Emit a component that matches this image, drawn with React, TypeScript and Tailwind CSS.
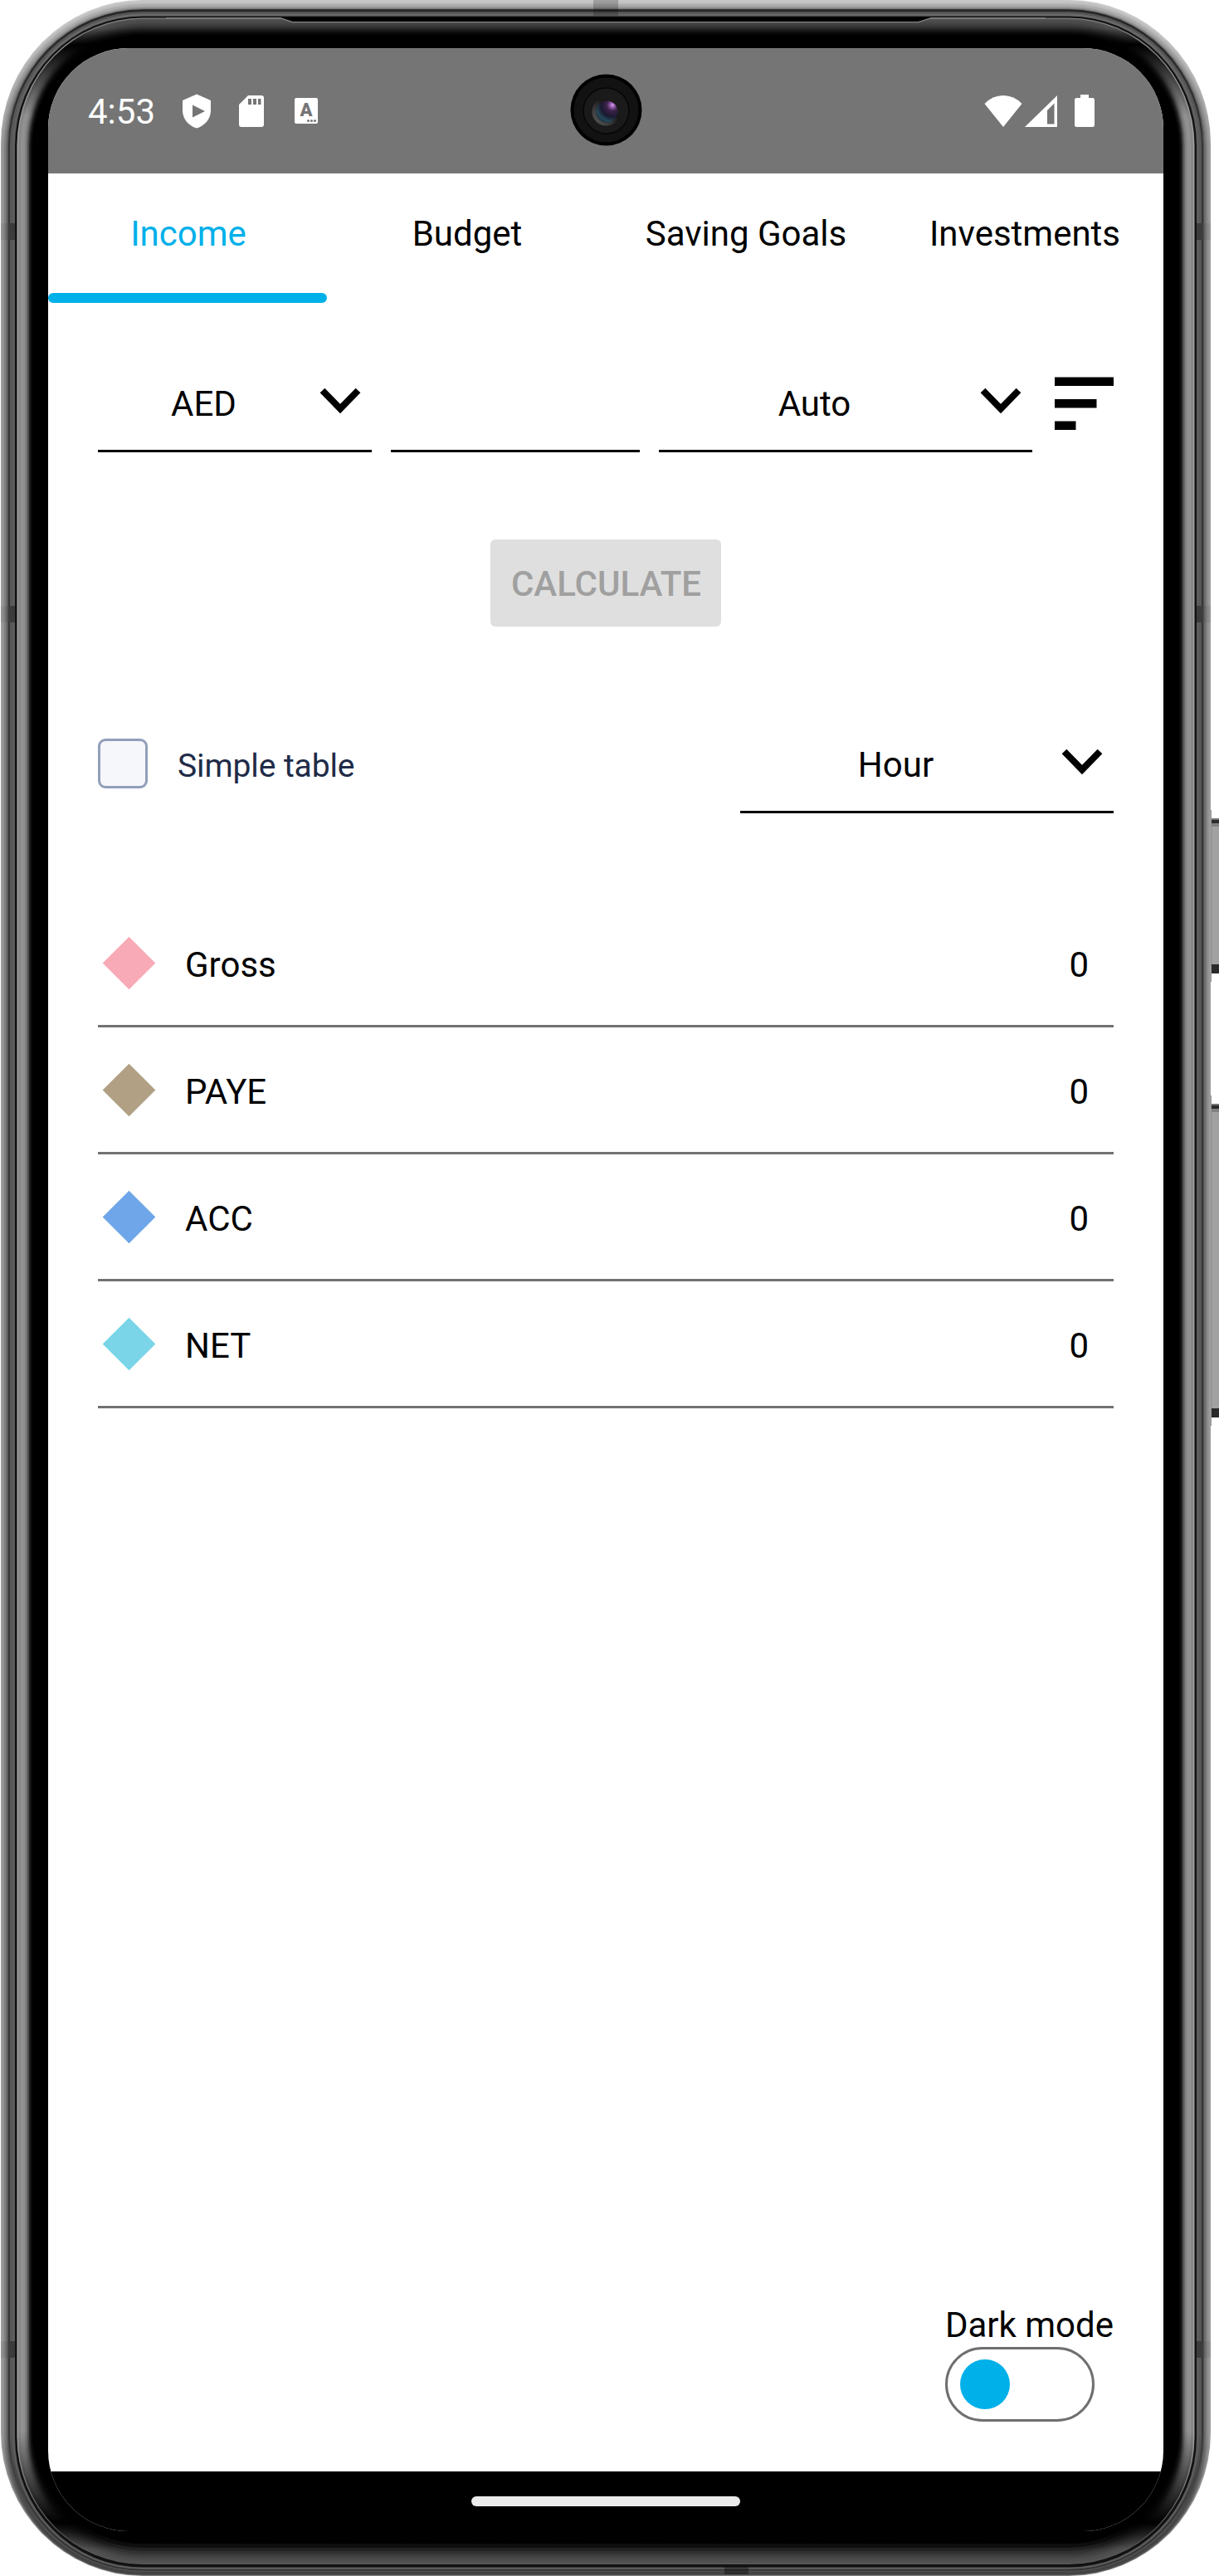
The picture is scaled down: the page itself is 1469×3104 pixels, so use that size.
import React from "react";

/* Shell layers from the outside in: insets [side, top, bottom] and grey levels [side, top, bottom]. */
const layers: { inset: [number, number, number]; tone: [number, number, number] }[] = [
  { inset: [1, 0, 0], tone: [156, 200, 138] },
  { inset: [3, 2.5, 0.7], tone: [146, 190, 90] },
  { inset: [5, 5, 1.5], tone: [128, 172, 72] },
  { inset: [7, 8, 2.5], tone: [110, 150, 64] },
  { inset: [8.7, 10, 3.5], tone: [86, 118, 69] },
  { inset: [10, 11.3, 5], tone: [54, 38, 80] },
  { inset: [12, 14, 6.5], tone: [88, 84, 48] },
  { inset: [15, 16.5, 8], tone: [92, 104, 90] },
  { inset: [18, 19.5, 10.5], tone: [18, 16, 18] },
  { inset: [20.5, 21.5, 14], tone: [160, 128, 88] },
  { inset: [22, 22.8, 15], tone: [136, 80, 82] },
  { inset: [25, 25, 17], tone: [146, 74, 78] },
  { inset: [28, 28, 20], tone: [142, 66, 73] },
  { inset: [30, 30, 22], tone: [128, 58, 66] },
  { inset: [32, 32, 24.5], tone: [106, 48, 58] },
  { inset: [33.5, 34, 27], tone: [74, 38, 48] },
  { inset: [35, 36, 30], tone: [40, 27, 34] },
  { inset: [36.5, 38.5, 34], tone: [14, 13, 16] },
  { inset: [38.5, 41.5, 39], tone: [0, 0, 0] },
];

const grey = (n: number) => `rgb(${n},${n},${n})`;

function PhoneShell() {
  return (
    <svg className="pointer-events-none absolute inset-0" width="1469" height="3104" viewBox="0 0 1469 3104">
      <defs>
        {layers.map((l, i) => {
          const sheen = i > 9;
          return (
            <linearGradient key={i} id={`shell${i}`} gradientUnits="userSpaceOnUse" x1="0" y1="0" x2="0" y2="3104">
              <stop offset={(sheen ? 34 : 25) / 3104} stopColor={grey(l.tone[1])} />
              {sheen && <stop offset={54 / 3104} stopColor={grey(0)} />}
              <stop offset={(sheen ? 140 : 180) / 3104} stopColor={grey(l.tone[0])} />
              <stop offset={2930 / 3104} stopColor={grey(l.tone[0])} />
              {sheen && <stop offset={3040 / 3104} stopColor={grey(0)} />}
              <stop offset={(sheen ? 3072 : 3050) / 3104} stopColor={grey(l.tone[2])} />
            </linearGradient>
          );
        })}
        <linearGradient id="side" x1="0" x2="1" y1="0" y2="0">
          <stop offset="0" stopColor="#686868" />
          <stop offset="0.3" stopColor="#a2a2a2" />
          <stop offset="1" stopColor="#a0a0a0" />
        </linearGradient>
        <radialGradient id="lens" cx="0.75" cy="0.2" r="0.9">
          <stop offset="0" stopColor="#dca0f0" />
          <stop offset="0.13" stopColor="#8d57a4" />
          <stop offset="0.3" stopColor="#3b2148" />
          <stop offset="0.6" stopColor="#1a1a30" />
          <stop offset="0.85" stopColor="#25485a" />
          <stop offset="1" stopColor="#16303c" />
        </radialGradient>
        <linearGradient id="rim" x1="0" x2="1" y1="1" y2="0">
          <stop offset="0.1" stopColor="#555" />
          <stop offset="0.6" stopColor="#1a1a1a" />
        </linearGradient>
      </defs>

      {[
        [986, 187],
        [1330, 378],
      ].map(([y, h]) => (
        <g key={y}>
          <rect x="1458" y={y} width="11" height={h} fill="url(#side)" />
          <rect x="1460" y={y} width="9" height="3" fill="#777" />
          <rect x="1460" y={y + 2} width="9" height="4" fill="#2c2c2c" />
          <rect x="1460" y={y + 6} width="9" height="4" fill="#808080" />
          <rect x="1460" y={y + h - 11} width="9" height="11" fill="#2a2a2a" />
          <rect x="1457" y={y - 10} width="3" height={h + 20} fill="#999" />
        </g>
      ))}

      {layers.map(({ inset: [s, t, b] }, i) => (
        <rect key={i} x={s} y={t} width={1460 - 2 * s} height={3104 - t - b} rx={172 - s} ry={174 - s} fill={`url(#shell${i})`} />
      ))}

      <path d="M337 21H1123L1107 26H353Z" fill="#000" />
      <path d="M200 21.6H338L352 26.6H1107L1122 21.6H1260" fill="none" stroke="#808080" strokeWidth="1.3" />
      <rect x="715" y="0" width="30" height="19" fill="#000" fillOpacity="0.2" />
      <rect x="873" y="3093" width="29" height="9" fill="#000" fillOpacity="0.35" />
      {[269, 730, 2821].map((y) => (
        <g key={y}>
          <rect x="10" y={y} width="8" height="20" fill="#3c3c3c" />
          <rect x="1" y={y} width="9" height="20" fill="#000" fillOpacity="0.06" />
          <rect x="1442" y={y} width="8" height="20" fill="#3c3c3c" />
          <rect x="1450" y={y} width="9" height="20" fill="#000" fillOpacity="0.06" />
        </g>
      ))}
    </svg>
  );
}

function Camera() {
  return (
    <svg className="absolute left-[629px] top-[31px]" width="87" height="87" viewBox="-43.5 -43.5 87 87">
      <circle r="43" fill="#000" />
      <circle r="39" fill="#121212" />
      <circle r="27.5" cy="1" fill="#1a1a1a" stroke="#060606" strokeWidth="1.5" />
      <circle r="17" cy="2" fill="url(#rim)" />
      <circle r="13" cy="2" cx="1" fill="url(#lens)" />
    </svg>
  );
}

function StatusBar() {
  return (
    <div className="relative flex h-[151px] items-start justify-between bg-[#757575] pl-12 pr-[83px] text-white">
      <div className="flex h-[151px] items-center">
        <span className="w-[114px] pt-0.5 text-[42px] leading-[48px]">4:53</span>
        <svg width="34" height="42" viewBox="0 0 34 42">
          <path fillRule="evenodd" fill="#fff" d="M17 0.500L34 8V20C34 30 27 38.500 17 41.500C7 38.500 0 30 0 20V8ZM12 13.500V28.500L27 21Z" />
        </svg>
        <svg className="ml-[34px]" width="30" height="38" viewBox="0 0 30 38">
          <path fillRule="evenodd" fill="#fff" d="M11 0H27Q30 0 30 3V35Q30 38 27 38H3Q0 38 0 35V11ZM11 4V11H15V4ZM17 4V11H21V4ZM23 4V11H26.500V4Z" />
        </svg>
        <span className="relative ml-[37px] flex h-[31px] w-7 justify-center rounded-[2px] bg-white text-[#757575]">
          <span className="text-[22px] leading-[29px] font-black">A</span>
          <span className="absolute right-0.5 bottom-0.5 flex gap-px">
            <i className="size-[3px] rounded-full bg-[#757575]" />
            <i className="size-[3px] rounded-full bg-[#757575]" />
            <i className="size-[3px] rounded-full bg-[#757575]" />
          </span>
        </span>
      </div>
      <Camera />
      <div className="flex h-[151px] items-center">
        <svg width="46" height="38" viewBox="0 0 46 38">
          <path fill="#fff" d="M23 38L0.500 10Q10 0 23 0T45.500 10Z" />
        </svg>
        <svg className="ml-[3px]" width="39" height="38" viewBox="0 0 39 38">
          <path fillRule="evenodd" fill="#fff" d="M39 0V38H0ZM35.500 9.500L27 18V34.500H35.500Z" />
        </svg>
        <svg className="ml-[21px]" width="24" height="39" viewBox="0 0 24 39">
          <path fill="#fff" d="M7 0H17V4H21.500Q24 4 24 6.500V36.500Q24 39 21.500 39H2.500Q0 39 0 36.500V6.500Q0 4 2.500 4H7Z" />
        </svg>
      </div>
    </div>
  );
}

function Chevron() {
  return (
    <svg className="mt-[-4px]" width="50" height="32" viewBox="0 0 50 32" fill="none">
      <path d="M3.500 3.500L25 25.500L46.500 3.500" stroke="#000" strokeWidth="8" />
    </svg>
  );
}

function Select({ label, className }: { label: string; className: string }) {
  return (
    <div className={`flex h-[117px] items-center border-b-[3px] border-black ${className}`}>
      <span className="flex-1 pt-[3px] pl-px text-center text-[42px] leading-[48px]">{label}</span>
      <span className="flex w-[76px] justify-center">
        <Chevron />
      </span>
    </div>
  );
}

const tabs = ["Income", "Budget", "Saving Goals", "Investments"];

const rows = [
  { name: "Gross", value: 0, color: "bg-[#f8abb7]" },
  { name: "PAYE", value: 0, color: "bg-[#b1a084]" },
  { name: "ACC", value: 0, color: "bg-[#6fa5e9]" },
  { name: "NET", value: 0, color: "bg-[#7ad5e8]" },
];

export default function App() {
  return (
    <div className="relative h-[3104px] w-[1469px] overflow-hidden bg-white pt-[58px] pl-[58px] font-[Roboto,sans-serif] text-black">
      <PhoneShell />
      <div className="relative flex h-[2992px] w-[1344px] flex-col overflow-hidden rounded-[97px] bg-white">
        <StatusBar />

        <nav className="grid h-[156px] grid-cols-4">
          {tabs.map((t, i) => (
            <div key={t} className={`flex flex-col justify-between text-center text-[42px] leading-[48px] ${i === 0 ? "text-[#00b0e9]" : ""}`}>
              <span className="pt-[49px] pl-0.5 whitespace-nowrap">{t}</span>
              {i === 0 && <span className="h-3 rounded-full bg-[#00b0e9]" />}
            </div>
          ))}
        </nav>

        <main className="flex flex-1 flex-col px-[60px]">
          <div className="mt-[63px] flex">
            <Select label="AED" className="w-[330px]" />
            <div className="ml-[23px] w-[300px] border-b-[3px] border-black" />
            <Select label="Auto" className="ml-[23px] w-[450px]" />
            <svg className="mt-[26px] ml-[27px]" width="71" height="64" viewBox="0 0 71 64">
              <path d="M0 0.500H71V11H0ZM0 27H50.500V37.500H0ZM0 53.500H25.500V64H0Z" />
            </svg>
          </div>

          <button className="mt-[105px] h-[105px] w-[278px] self-center rounded-md bg-[#dfdfdf] pt-[3px] pl-px text-[42px] leading-[48px] font-medium text-[#a0a0a0]">
            CALCULATE
          </button>

          <div className="mt-[108px] flex h-[117px] justify-between">
            <label className="mt-[27px] flex h-[60px] items-center">
              <span className="size-[60px] rounded-[9px] border-[3px] border-[#919fba] bg-[#f5f7fa]" />
              <span className="mt-[5px] ml-9 text-[39px] leading-[48px] tracking-[-0.1px] text-[#212b47]">Simple table</span>
            </label>
            <Select label="Hour" className="w-[450px]" />
          </div>

          <div className="mt-[105px]">
            {rows.map((r) => (
              <div key={r.name} className="flex h-[153px] items-center border-b-[3px] border-[#727272] pr-[30px] text-[42px] leading-[48px]">
                <span className={`ml-[15px] size-[45px] rotate-45 ${r.color}`} />
                <span className="mt-[5px] ml-[45px] flex-1">{r.name}</span>
                <span className="mt-[5px]">{r.value}</span>
              </div>
            ))}
          </div>

          <div className="mt-auto mb-[60px] flex flex-col self-end">
            <span className="pb-px text-[42px] leading-[50px]">Dark mode</span>
            <span className="flex h-[90px] w-[180px] items-center rounded-full border-[3px] border-[#6f6f6f] pl-[15px]">
              <span className="size-[60px] rounded-full bg-[#00b0e9]" />
            </span>
          </div>
        </main>

        <footer className="flex h-[72px] justify-center bg-black pt-[30px]">
          <span className="h-3 w-[324px] rounded-full bg-[#ebebeb]" />
        </footer>
      </div>
    </div>
  );
}
